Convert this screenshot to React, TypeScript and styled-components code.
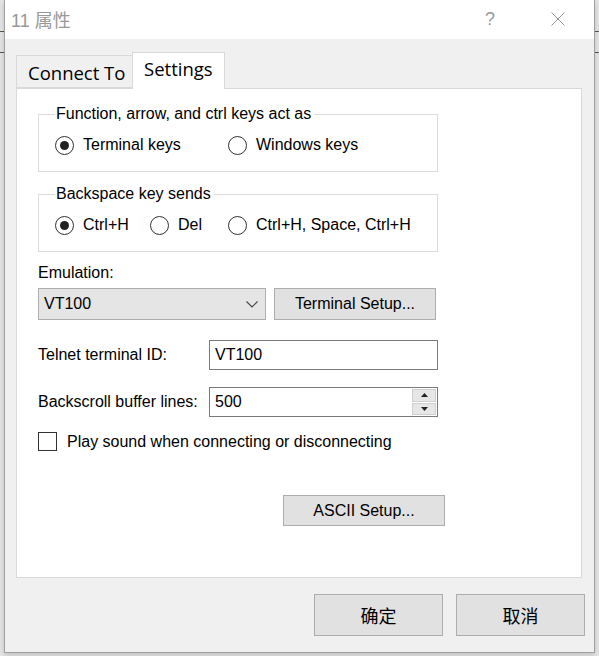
import React from "react";
import styled, { createGlobalStyle } from "styled-components";

const Global = createGlobalStyle`
  html, body { margin: 0; padding: 0; }
  body {
    width: 599px; height: 656px; overflow: hidden;
    background:
      linear-gradient(#555, #555) 0 31px / 100% 1px no-repeat,
      linear-gradient(#555, #555) 0 52px / 100% 1px no-repeat,
      #e6e6e6;
    font-family: "Liberation Sans", Arial, sans-serif;
  }
`;

const Window = styled.div`
  margin-left: 4px;
  width: 591px;
  height: 653px;
  box-sizing: border-box;
  border: 1px solid #a0a0a0;
  border-top: none;
  background: #f0f0f0;
  display: flex;
  flex-direction: column;
  box-shadow: 0 2px 6px rgba(0,0,0,0.18);
`;

const TitleBar = styled.div`
  height: 39px;
  background: #fff;
  display: flex;
  align-items: center;
  padding-left: 6px;
  padding-bottom: 1px;
  box-sizing: border-box;
`;

const Title = styled.div`
  flex: 1;
  font-family: "Liberation Sans", "Noto Sans CJK SC", sans-serif;
  font-size: 18px;
  color: #999;
`;

const CaptionBtn = styled.div<{ $w: number }>`
  width: ${(p) => p.$w}px;
  height: 38px;
  display: flex;
  align-items: center;
  justify-content: center;
  color: #999;
  font-family: "Liberation Sans", sans-serif;
  font-size: 18px;
`;

const Body = styled.div`
  flex: 1;
  display: flex;
  flex-direction: column;
  padding: 13px 9px 0 11px;
`;

const TabRow = styled.div`
  display: flex;
  align-items: flex-end;
  height: 36px;
  position: relative;
  z-index: 1;
`;

const Tab = styled.div<{ $active?: boolean }>`
  box-sizing: border-box;
  font-family: "Open Sans", "Noto Sans", sans-serif;
  font-size: 18.5px;
  line-height: 24px;
  color: #000;
  border: 1px solid #d9d9d9;
  ${(p) =>
    p.$active
      ? `height: 37px; margin-bottom: -1px; border-bottom: none; background: #fff; padding: 4px 0 0 11px; width: 93px; margin-left: -1px;`
      : `height: 33px; border-right: none; background: #f0f0f0; padding: 5px 0 0 11px; width: 117px;`}
`;

const Panel = styled.div`
  width: 566px;
  height: 490px;
  box-sizing: border-box;
  border: 1px solid #d9d9d9;
  background: #fff;
  padding: 0 0 0 21px;
  display: flex;
  flex-direction: column;
  font-size: 16px;
  color: #000;
`;

const Group = styled.fieldset<{ $mt: number }>`
  margin: ${(p) => p.$mt}px 0 0 0;
  width: 400px;
  box-sizing: border-box;
  border: 1px solid #dcdcdc;
  padding: 0 0 16px 16px;
  min-width: 0;
`;

const Legend = styled.legend`
  padding: 0 3px 0 1px;
  margin-left: 0;
  line-height: 18px;
  font-size: 16px;
`;

const RadioRow = styled.div`
  display: flex;
  align-items: center;
  height: 20px;
  margin-top: 12px;
`;

const RadioItem = styled.label<{ $w?: number }>`
  display: flex;
  align-items: center;
  ${(p) => (p.$w ? `width: ${p.$w}px;` : "")}
`;

const Circle = styled.span<{ $on?: boolean }>`
  width: 19px;
  height: 19px;
  box-sizing: border-box;
  border: 1px solid #333;
  border-radius: 50%;
  display: flex;
  align-items: center;
  justify-content: center;
  margin-right: 9px;
  &::after {
    content: "";
    display: ${(p) => (p.$on ? "block" : "none")};
    width: 9px;
    height: 9px;
    border-radius: 50%;
    background: #222;
  }
`;

const Label = styled.div<{ $mt?: number; $w?: number }>`
  line-height: 18px;
  margin-top: ${(p) => p.$mt ?? 0}px;
  ${(p) => (p.$w ? `width: ${p.$w}px; flex-shrink: 0;` : "")}
`;

const Row = styled.div<{ $mt: number }>`
  display: flex;
  align-items: center;
  margin-top: ${(p) => p.$mt}px;
`;

const Select = styled.div`
  width: 228px;
  height: 32px;
  box-sizing: border-box;
  border: 1px solid #adadad;
  background: #e5e5e5;
  display: flex;
  align-items: center;
  padding: 0 7px 0 5px;
  justify-content: space-between;
`;

const Button = styled.div<{ $w: number; $h: number; $ml?: number; $cjk?: boolean }>`
  width: ${(p) => p.$w}px;
  height: ${(p) => p.$h}px;
  margin-left: ${(p) => p.$ml ?? 0}px;
  box-sizing: border-box;
  border: 1px solid #adadad;
  background: #e1e1e1;
  display: flex;
  align-items: center;
  justify-content: center;
  flex-shrink: 0;
  font-family: ${(p) => (p.$cjk ? `"Noto Sans CJK SC", sans-serif` : `"Liberation Sans", Arial, sans-serif`)};
  font-size: ${(p) => (p.$cjk ? 18 : 16)}px;
  color: #000;
`;

const Input = styled.div<{ $h: number }>`
  width: 229px;
  height: ${(p) => p.$h}px;
  box-sizing: border-box;
  border: 1px solid #7a7a7a;
  background: #fff;
  display: flex;
  align-items: center;
  padding-left: 5px;
`;

const InputText = styled.div`
  flex: 1;
`;

const Spinner = styled.div`
  width: 25px;
  height: 100%;
  display: flex;
  flex-direction: column;
  padding: 1px 1px 1px 0;
  box-sizing: border-box;
  gap: 1px;
`;

const SpinBtn = styled.div`
  flex: 1;
  background: #e6e6e6;
  border: 1px solid #cfcfcf;
  display: flex;
  align-items: center;
  justify-content: center;
`;

const Check = styled.span`
  width: 19px;
  height: 19px;
  box-sizing: border-box;
  border: 1px solid #333;
  background: #fff;
  margin-right: 10px;
  flex-shrink: 0;
`;

const Footer = styled.div`
  display: flex;
  justify-content: flex-end;
  gap: 13px;
  margin-top: 16px;
`;

export default function App() {
  return (
    <>
      <Global />
      <Window>
        <TitleBar>
          <Title>11 属性</Title>
          <CaptionBtn $w={94}>?</CaptionBtn>
          <CaptionBtn $w={42}>
            <svg width="14" height="14" viewBox="0 0 14 14">
              <path d="M0.5 0.5 L13.5 13.5 M13.5 0.5 L0.5 13.5" stroke="#999" strokeWidth="1" fill="none" />
            </svg>
          </CaptionBtn>
          <div style={{ width: 15 }} />
        </TitleBar>
        <Body>
          <TabRow>
            <Tab>Connect To</Tab>
            <Tab $active>Settings</Tab>
          </TabRow>
          <Panel>
            <Group $mt={16}>
              <Legend>Function, arrow, and ctrl keys act as</Legend>
              <RadioRow>
                <RadioItem $w={173}>
                  <Circle $on />
                  Terminal keys
                </RadioItem>
                <RadioItem>
                  <Circle />
                  Windows keys
                </RadioItem>
              </RadioRow>
            </Group>
            <Group $mt={13}>
              <Legend>Backspace key sends</Legend>
              <RadioRow>
                <RadioItem $w={95}>
                  <Circle $on />
                  Ctrl+H
                </RadioItem>
                <RadioItem $w={78}>
                  <Circle />
                  Del
                </RadioItem>
                <RadioItem>
                  <Circle />
                  Ctrl+H, Space, Ctrl+H
                </RadioItem>
              </RadioRow>
            </Group>
            <Label $mt={12}>Emulation:</Label>
            <Row $mt={6}>
              <Select>
                <span>VT100</span>
                <svg width="12" height="7" viewBox="0 0 12 7">
                  <path d="M0.5 0.5 L6 6 L11.5 0.5" stroke="#444" strokeWidth="1.1" fill="none" />
                </svg>
              </Select>
              <Button $w={162} $h={32} $ml={8}>Terminal Setup...</Button>
            </Row>
            <Row $mt={20}>
              <Label $w={171}>Telnet terminal ID:</Label>
              <Input $h={30}>
                <InputText>VT100</InputText>
              </Input>
            </Row>
            <Row $mt={17}>
              <Label $w={171}>Backscroll buffer lines:</Label>
              <Input $h={30}>
                <InputText>500</InputText>
                <Spinner>
                  <SpinBtn>
                    <svg width="7" height="4" viewBox="0 0 7 4"><path d="M0 4 L3.5 0 L7 4 Z" fill="#222" /></svg>
                  </SpinBtn>
                  <SpinBtn>
                    <svg width="7" height="4" viewBox="0 0 7 4"><path d="M0 0 L3.5 4 L7 0 Z" fill="#222" /></svg>
                  </SpinBtn>
                </Spinner>
              </Input>
            </Row>
            <Row $mt={15}>
              <Check />
              <span>Play sound when connecting or disconnecting</span>
            </Row>
            <Row $mt={44}>
              <Button $w={162} $h={31} $ml={245}>ASCII Setup...</Button>
            </Row>
          </Panel>
          <Footer>
            <Button $w={129} $h={42} $cjk>确定</Button>
            <Button $w={129} $h={42} $cjk>取消</Button>
          </Footer>
        </Body>
      </Window>
    </>
  );
}
